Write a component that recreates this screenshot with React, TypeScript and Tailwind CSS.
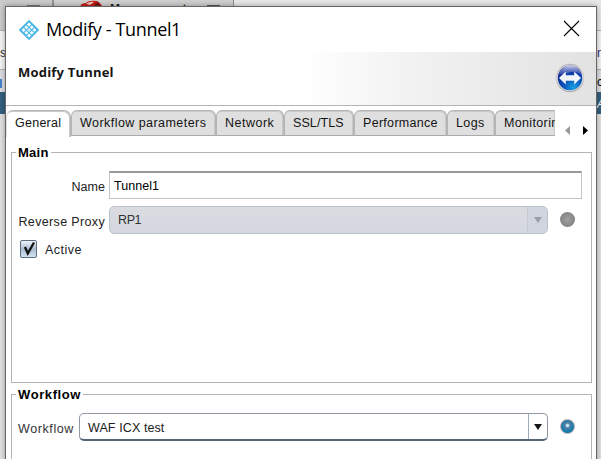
import React from 'react';

const sans = "font-['Liberation_Sans',Arial,sans-serif] text-[12.5px] leading-[16px] tracking-[0.35px]";

function DiamondLogo() {
  return (
    <svg width="20" height="20" viewBox="0 0 20 20" fill="none" stroke="#45b5e5" strokeWidth="1.9">
      <path d="M10 1.2 18.8 10 10 18.8 1.2 10Z" />
      <path d="M7.2 4.6 15.2 12.4M4.6 7.4 12.6 15.4M12.8 4.6 4.8 12.6M15.4 7.4 7.4 15.4" strokeWidth="1.2" />
      <path d="M10 7.6 12.4 10 10 12.4 7.6 10Z" fill="#c9ebf9" strokeWidth=".6" />
    </svg>
  );
}

function TunnelIcon() {
  return (
    <svg width="30" height="30" viewBox="0 0 30 30">
      <defs>
        <linearGradient id="ring" x1="0" y1="0" x2="0" y2="1">
          <stop offset="0" stopColor="#b2b2b6" />
          <stop offset=".5" stopColor="#d4d4d6" />
          <stop offset="1" stopColor="#a6a6a6" />
        </linearGradient>
        <radialGradient id="ball" cx=".65" cy=".9" r=".85">
          <stop offset="0" stopColor="#18a4e4" />
          <stop offset=".45" stopColor="#0a56bd" />
          <stop offset="1" stopColor="#10218f" />
        </radialGradient>
        <linearGradient id="gloss" x1="0" y1="0" x2="0" y2="1">
          <stop offset="0" stopColor="#c8cff0" />
          <stop offset="1" stopColor="#5568bd" stopOpacity=".5" />
        </linearGradient>
      </defs>
      <circle cx="15" cy="15" r="14.3" fill="url(#ring)" />
      <circle cx="15" cy="15" r="13.2" fill="#d3d4d9" />
      <circle cx="15" cy="15" r="12.2" fill="url(#ball)" />
      <path d="M3.6 11.5A11.8 11.8 0 0 1 26.4 11.5Q20 7 13 10 8 12 3.6 11.5Z" fill="url(#gloss)" />
      <path d="M4 15 10.8 8.4V12.2H19.2V8.4L26 15 19.2 21.6V17.8H10.8V21.6Z" fill="#f1f3fa" />
    </svg>
  );
}

function Tab({ label, width, tracking, active = false, cut = false }: { label: string; width: string; tracking: string; active?: boolean; cut?: boolean }) {
  return (
    <div
      className={`shrink-0 overflow-hidden whitespace-nowrap border-x-[1.5px] border-t-[1.5px] border-[#b5b5b5] pl-[8px] pt-[4px] shadow-[inset_-1px_1px_0_#c9c9c9] ${width} ${tracking} ${
        active ? 'h-[27px] rounded-t-[7px] border-b-0 border-l-[#dddddd] bg-white' : 'h-[26px] rounded-t-[6px] border-b border-b-[#aaaaaa] bg-[#dfdfdf]'
      } ${cut ? 'rounded-tr-none border-r-0' : ''} text-[#141414]`}
    >
      {label}
    </div>
  );
}

function Group({ title, titleTracking, className, children }: { title: string; titleTracking: string; className: string; children: React.ReactNode }) {
  return (
    <section className={`ml-[5px] w-[581px] border border-[#b4b4b4] ${className}`}>
      <h2 className={`-mt-[9px] ml-[4px] w-fit bg-white pl-[2px] pr-[2px] text-[13px] font-bold leading-[18px] text-black ${titleTracking}`}>{title}</h2>
      {children}
    </section>
  );
}

function Backdrop() {
  return (
    <div className="absolute inset-0 bg-[#e2e2e2] text-[12px]">
      <div className="flex h-[30px] bg-[#e9e9e9]">
        <div className="w-[54px] border-r-2 border-[#929292] bg-[#cccccc] pl-[27px] pt-[5px]"><div className="h-[2px] w-[13px] bg-[#777777]" /></div>
        <div className="flex w-[180px] overflow-hidden border-r border-[#929292] bg-[#d0d0d0]">
          <svg className="ml-[25px]" width="26" height="10" viewBox="0 0 26 10">
            <path d="M1 10Q0 3 7 3Q10 0 18 1Q25 5 23 10Z" fill="#c51d16" />
            <path d="M7 4Q11 1 15 2L11 5Z" fill="#f4c2bb" />
            <path d="M15 5 19 2 21 6Z" fill="#631410" />
          </svg>
          <span className="ml-[5px] mt-[2px] w-[80px] text-[12px] font-bold leading-[14px] text-[#252525]">Management</span>
          <div className="ml-[17px] mt-[5px] h-[2px] w-[13px] bg-[#555555]" />
        </div>
      </div>
      <div className="flex h-[40px] justify-between border-y border-[#b2b2b2] bg-[#f5f5f5] leading-[44px]">
        <span className="w-[6px] overflow-hidden text-[#333333]">s</span><span className="w-[4px] text-[#303080]">n</span>
      </div>
      <div className="flex h-[22px] justify-between bg-[#dedee3] leading-[25px]"><span className="mt-[9px] h-[9px] w-[2px] bg-[#4185ce]" /><span className="w-[4px]">c</span></div>
      <div className="flex h-[22px] justify-end bg-[#35617f] leading-[24px] text-white"><span className="w-[4px] italic">A</span></div>
    </div>
  );
}

export default function App() {
  return (
    <main className={`relative h-[459px] w-[601px] overflow-hidden ${sans}`}>
      <Backdrop />
      <div className="absolute left-[5px] top-[6px] h-[460px] w-[592px] border border-[#666666] bg-white shadow-[0_0_6px_rgba(0,0,0,0.35)]">
        <header className="flex h-[45px] items-center">
          <div className="ml-[13px]"><DiamondLogo /></div>
          <h1 className="-mt-px ml-[7px] whitespace-nowrap font-['Open_Sans','Noto_Sans',sans-serif] text-[18px] font-normal leading-[24px] tracking-[-0.36px] text-black">Modify - Tunnel1</h1>
          <svg className="-mt-[2px] ml-auto mr-[16px]" width="17" height="17" viewBox="0 0 17 17" stroke="#000" strokeWidth="1.1"><path d="M1 1 16 16M16 1 1 16" /></svg>
        </header>
        <div className="flex h-[54px] items-start border-b border-[#b5b5b5] bg-[linear-gradient(90deg,#fff_50%,#f3f3f3_67%,#e2e2e2_100%)]">
          <h2 className="ml-[12px] mt-[12px] whitespace-nowrap font-['Open_Sans','Noto_Sans',sans-serif] text-[13px] font-bold leading-[17px] tracking-[0.2px] text-[#151515]">Modify Tunnel</h2>
          <div className="ml-auto mr-[11px] mt-[11px]"><TunnelIcon /></div>
        </div>
        <nav className="flex h-[31px] pt-[4px]">
          <Tab label="General" width="w-[65px]" tracking="tracking-[0.25px]" active />
          <Tab label="Workflow parameters" width="w-[145px]" tracking="tracking-[0.45px]" />
          <Tab label="Network" width="w-[68px]" tracking="tracking-[0.5px]" />
          <Tab label="SSL/TLS" width="w-[70px]" tracking="tracking-[0.1px]" />
          <Tab label="Performance" width="w-[93px]" tracking="tracking-[0.3px]" />
          <Tab label="Logs" width="w-[48px]" tracking="tracking-[0.4px]" />
          <Tab label="Monitoring" width="w-[60px]" tracking="tracking-[0.35px]" cut />
          <div className="ml-[10px] mt-[16px] flex h-[9px] gap-[13px]">
            <svg width="5" height="9" viewBox="0 0 5 9"><path d="M5 0V9L0 4.5Z" fill="#999" /></svg>
            <svg width="5" height="9" viewBox="0 0 5 9"><path d="M0 0V9L5 4.5Z" fill="#000" /></svg>
          </div>
        </nav>
        <Group title="Main" titleTracking="tracking-[0.25px]" className="mt-[15px] h-[231px]">
          <div className="mt-[9px] flex h-[28px] items-center">
            <label className="mt-[4px] w-[93px] text-right tracking-[0.05px] text-[#222222]">Name</label>
            <div className="ml-[4px] h-[28px] w-[473px] border border-t-2 border-[#c5c5c5] border-t-[#999999] pl-[4px] pt-[5px] tracking-[0.05px] text-black">Tunnel1</div>
          </div>
          <div className="mt-[7px] flex h-[28px] items-center">
            <label className="mt-[4px] w-[93px] whitespace-nowrap text-right text-[#222222]">Reverse Proxy</label>
            <div className="ml-[4px] flex h-[28px] w-[439px] overflow-hidden rounded-[5px] border border-[#bcc2cc] bg-linear-to-b from-[#dadce1] to-[#d4d7e0] pl-[8px] pt-0 text-[#303030]">
              <span className="mt-[5px] tracking-[-0.4px]">RP1</span>
              <div className="ml-auto flex w-[20px] items-center justify-center border-l border-[#c4cad5] bg-[#d0d5df]">
                <svg width="8" height="6" viewBox="0 0 8 6"><path d="M0 0H8L4 6Z" fill="#989da7" /></svg>
              </div>
            </div>
            <div className="-mt-[2px] ml-[12px] h-[15px] w-[15px] rounded-full bg-[radial-gradient(circle,#a0a0a0,#858585_70%)]" />
          </div>
          <div className="mt-[7px] flex h-[18px] items-center">
            <div className="-mt-[2px] ml-[8px] h-[18px] w-[17px] rounded-[2px] border border-[#5d6d7d] bg-linear-to-b from-[#edf3f9] via-[#a9bdd1] to-[#d1e3ef]">
              <svg width="15" height="16" viewBox="0 0 15 16"><path d="M4 6 6.8 12.5 13 1.5" fill="none" stroke="#111" strokeWidth="2.3" /></svg>
            </div>
            <label className="ml-[8px] text-[#222222] tracking-[0.5px]">Active</label>
          </div>
        </Group>
        <Group title="Workflow" titleTracking="tracking-[0.6px]" className="mt-[11px] h-[90px]">
          <div className="mt-[9px] flex h-[28px] items-center">
            <label className="ml-[6px] mt-[4px] w-[61px] tracking-[0.6px] text-[#333333]">Workflow</label>
            <div className="flex h-[28px] w-[469px] overflow-hidden rounded-[5px] border border-b-2 border-[#8f98a3] border-b-[#536577] pl-[8px] text-[#202020]">
              <span className="mt-[6px] tracking-[0.1px]">WAF ICX test</span>
              <div className="ml-auto flex w-[19px] items-center justify-center border-l border-[#9dadba]">
                <svg width="8" height="6" viewBox="0 0 8 6"><path d="M0 0H8L4 6Z" fill="#151515" /></svg>
              </div>
            </div>
            <div className="-mt-px ml-[12px] h-[15px] w-[15px] rounded-full border border-[#c7a7aa] bg-[radial-gradient(circle_at_50%_42%,#c4e2f3_0_12%,#477da5_25%_36%,#087eb0_65%)]" />
          </div>
        </Group>
      </div>
    </main>
  );
}
